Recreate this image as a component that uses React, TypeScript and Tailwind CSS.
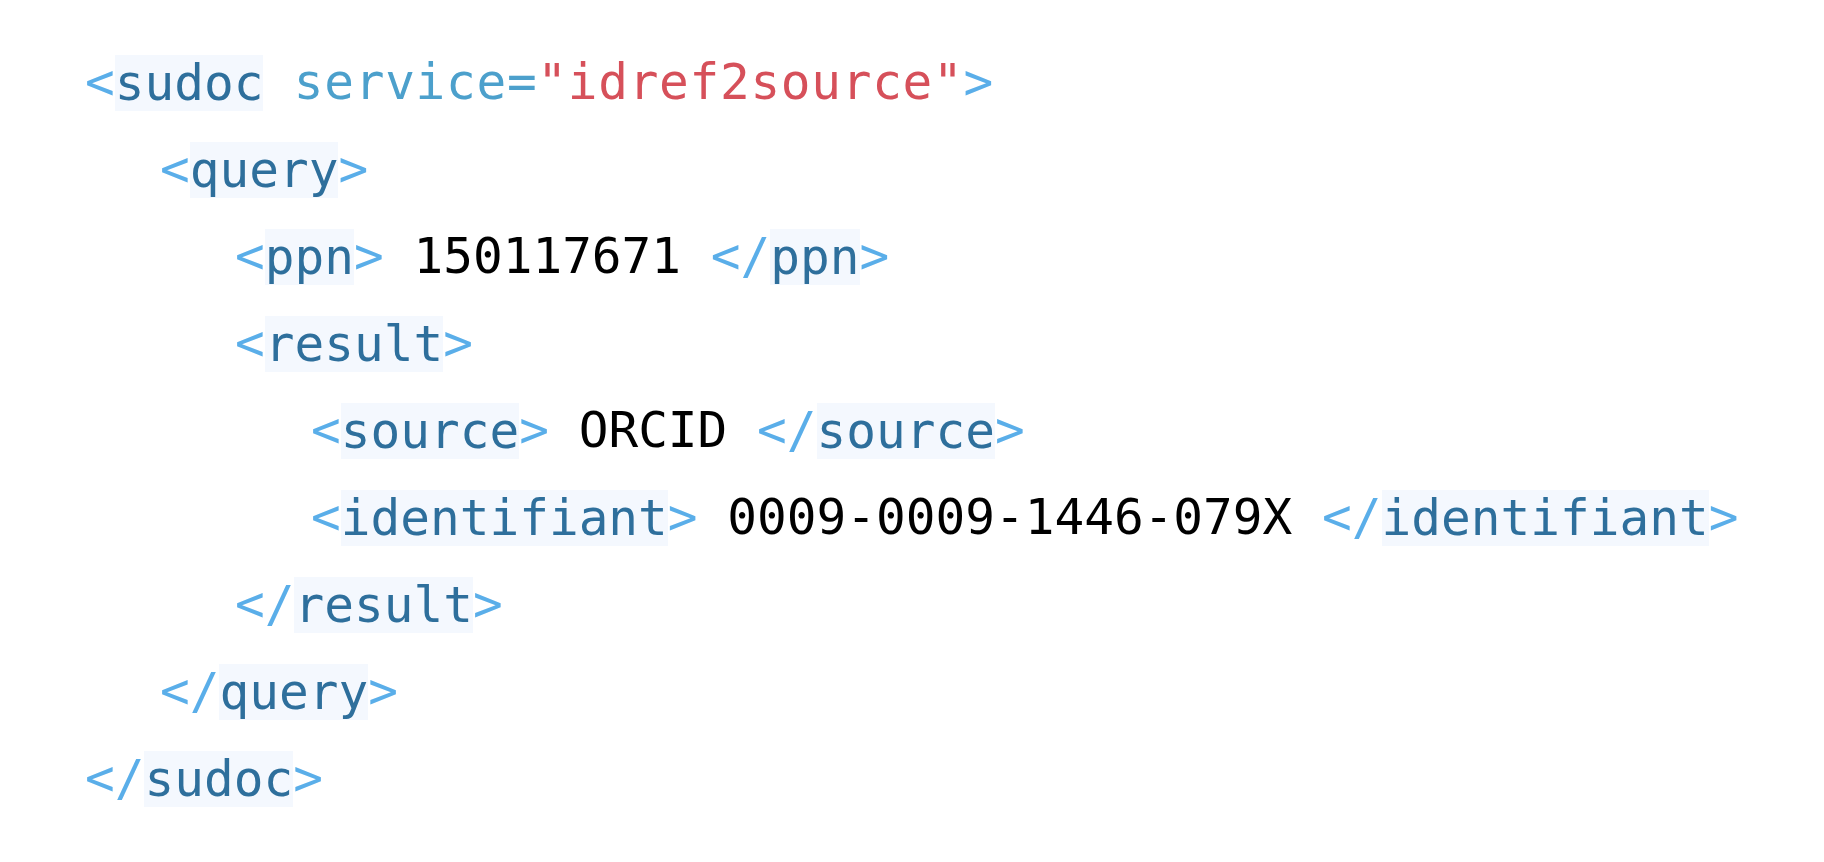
import React from 'react'

type Part = { t: string; k: 'br' | 'tag' | 'attr' | 'val' | 'txt' }

// une ligne de XML = un niveau d'indentation + des morceaux colorés
const lines: { lvl: number; parts: Part[] }[] = [
  {
    lvl: 0,
    parts: [
      { t: '<', k: 'br' },
      { t: 'sudoc', k: 'tag' },
      { t: ' service=', k: 'attr' },
      { t: '"idref2source"', k: 'val' },
      { t: '>', k: 'br' },
    ],
  },
  { lvl: 1, parts: [{ t: '<', k: 'br' }, { t: 'query', k: 'tag' }, { t: '>', k: 'br' }] },
  {
    lvl: 2,
    parts: [
      { t: '<', k: 'br' },
      { t: 'ppn', k: 'tag' },
      { t: '>', k: 'br' },
      { t: ' 150117671 ', k: 'txt' },
      { t: '</', k: 'br' },
      { t: 'ppn', k: 'tag' },
      { t: '>', k: 'br' },
    ],
  },
  { lvl: 2, parts: [{ t: '<', k: 'br' }, { t: 'result', k: 'tag' }, { t: '>', k: 'br' }] },
  {
    lvl: 3,
    parts: [
      { t: '<', k: 'br' },
      { t: 'source', k: 'tag' },
      { t: '>', k: 'br' },
      { t: ' ORCID ', k: 'txt' },
      { t: '</', k: 'br' },
      { t: 'source', k: 'tag' },
      { t: '>', k: 'br' },
    ],
  },
  {
    lvl: 3,
    parts: [
      { t: '<', k: 'br' },
      { t: 'identifiant', k: 'tag' },
      { t: '>', k: 'br' },
      { t: ' 0009-0009-1446-079X ', k: 'txt' },
      { t: '</', k: 'br' },
      { t: 'identifiant', k: 'tag' },
      { t: '>', k: 'br' },
    ],
  },
  { lvl: 2, parts: [{ t: '</', k: 'br' }, { t: 'result', k: 'tag' }, { t: '>', k: 'br' }] },
  { lvl: 1, parts: [{ t: '</', k: 'br' }, { t: 'query', k: 'tag' }, { t: '>', k: 'br' }] },
  { lvl: 0, parts: [{ t: '</', k: 'br' }, { t: 'sudoc', k: 'tag' }, { t: '>', k: 'br' }] },
]

const indent = ['pl-0', 'pl-[75px]', 'pl-[150px]', 'pl-[226px]']

function Token({ p }: { p: Part }) {
  if (p.k === 'tag') {
    return <span className="text-[#2e6f9c] bg-[#f4f8fe] leading-[56px] inline-block">{p.t}</span>
  }
  if (p.k === 'br') return <span className="text-[#5aaee9]">{p.t}</span>
  if (p.k === 'attr') return <span className="text-[#4ca0cc] tracking-[0.7px]">{p.t}</span>
  if (p.k === 'val') return <span className="text-[#d6505a] tracking-[0.7px]">{p.t}</span>
  return <span className="text-black">{p.t}</span>
}

function App() {
  return (
    <div className="w-[1824px] h-[862px] bg-white overflow-hidden pt-[39px] pl-[85px] font-['DejaVu_Sans_Mono',monospace] text-[49.4px]">
      {lines.map((ln, i) => (
        <div key={i} className={`h-[87px] flex items-center whitespace-pre ${indent[ln.lvl]}`}>
          {ln.parts.map((p, j) => (
            <Token key={j} p={p} />
          ))}
        </div>
      ))}
    </div>
  )
}

export default App
